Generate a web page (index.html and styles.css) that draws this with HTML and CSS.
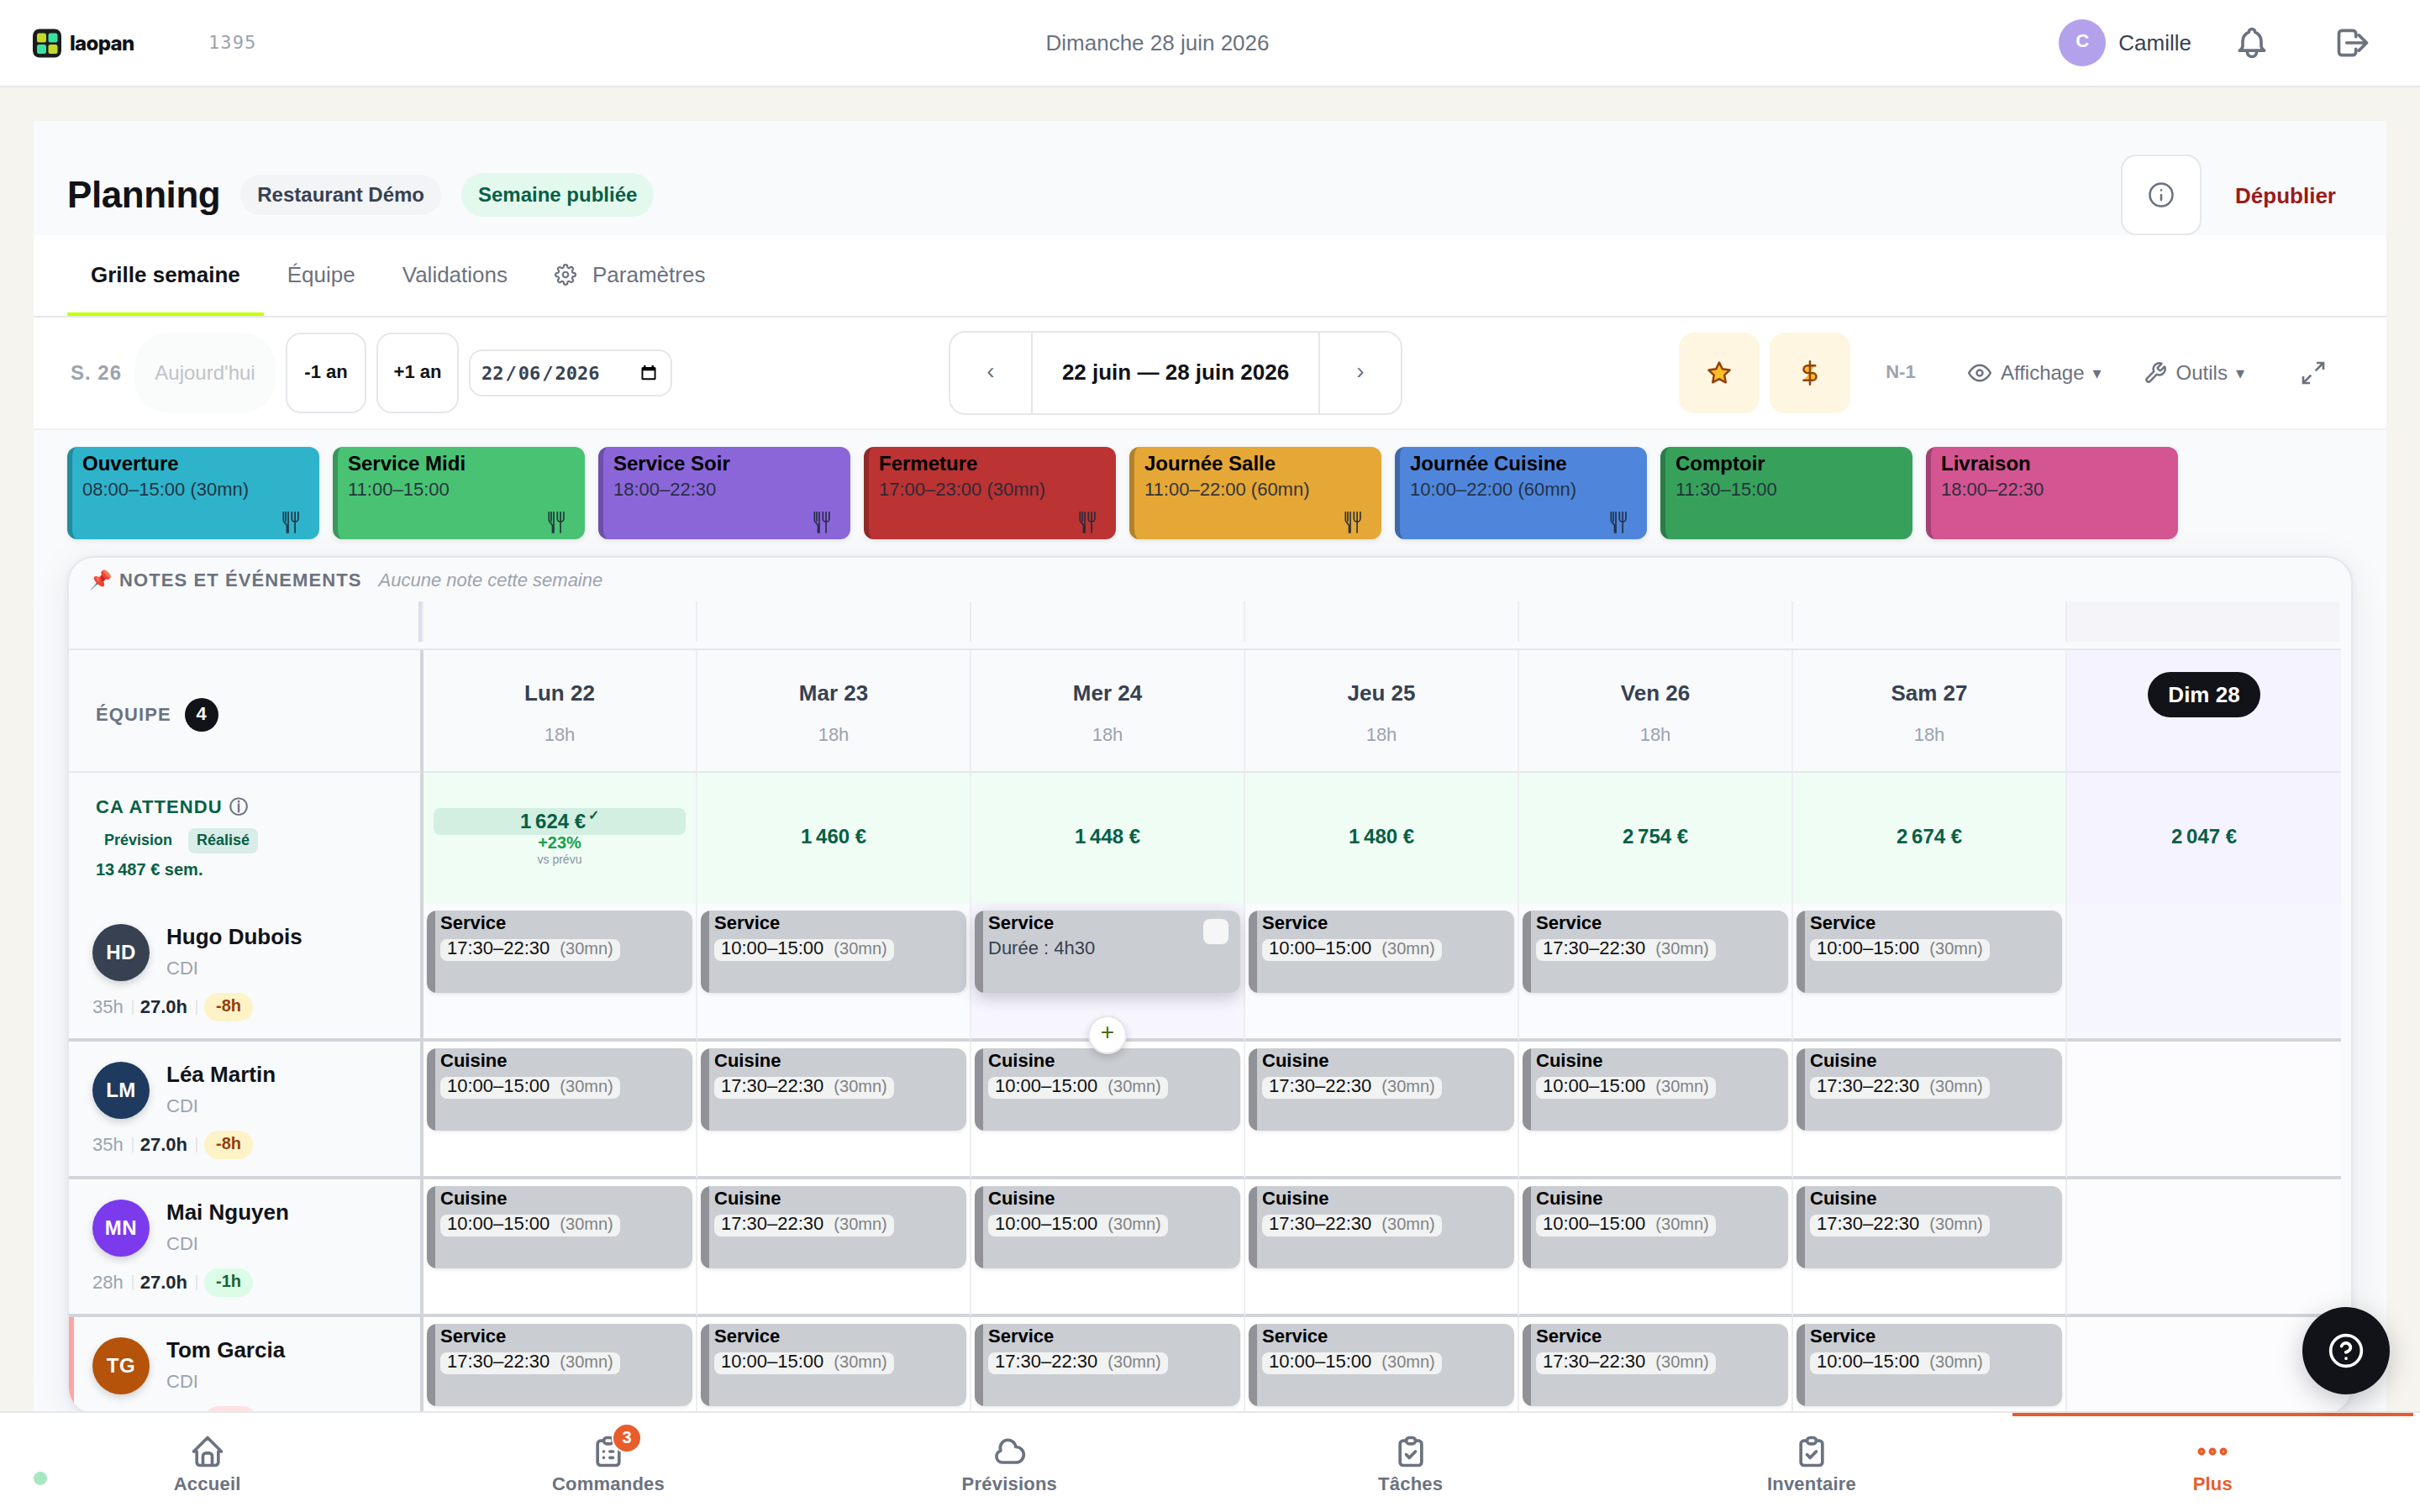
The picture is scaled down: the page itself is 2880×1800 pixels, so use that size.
FILE: index.html
```html
<!DOCTYPE html>
<html lang="fr">
<head>
<meta charset="utf-8">
<title>Planning – laopan</title>
<link rel="stylesheet" href="styles.css">
</head>
<body>
<svg class="sprite" aria-hidden="true">
  <symbol id="cutlery" viewBox="0 0 20 26"><path d="M1.3.8v9.400c0 4 4.200 3 4.200 7.300V25M4 .8v10.500M7 .8V25M11.300.8v7.700a3.800 3.800 0 0 0 7.600 0V.8M15.100.8V25"/></symbol>
  <symbol id="clip-check" viewBox="0 0 24 24"><path d="M9 5H7a2 2 0 0 0-2 2v12a2 2 0 0 0 2 2h10a2 2 0 0 0 2-2V7a2 2 0 0 0-2-2h-2"/><rect x="9" y="3" width="6" height="4" rx="2"/><path d="M9 14l2 2 4-4"/></symbol>
</svg>

<header class="topbar">
  <div class="brand">
    <svg class="brand-mark" viewBox="0 0 34 34"><rect width="34" height="34" rx="8" fill="#1a1d1c"/><rect x="5" y="5" width="11" height="11" rx="2.500" fill="#c5d92b"/><rect x="18.500" y="5" width="11" height="11" rx="2.500" fill="#3ce0a2"/><rect x="5" y="18.500" width="11" height="11" rx="2.500" fill="#3ce0a2"/><rect x="18.500" y="18.500" width="11" height="11" rx="2.500" fill="#c5d92b"/></svg>
    <span class="brand-name">laopan</span>
    <span class="brand-code">1395</span>
  </div>
  <div class="topbar-date">Dimanche 28 juin 2026</div>
  <div class="account">
    <span class="account-avatar">C</span>
    <span class="account-name">Camille</span>
    <svg class="icon icon-44 bell" viewBox="0 0 24 24"><path d="M10 5a2 2 0 1 1 4 0a7 7 0 0 1 4 6v3a4 4 0 0 0 2 3h-16a4 4 0 0 0 2-3v-3a7 7 0 0 1 4-6M9 17v1a3 3 0 0 0 6 0v-1"/></svg>
    <svg class="icon icon-44 logout" viewBox="0 0 24 24"><path d="M14 8V6a2 2 0 0 0-2-2H5a2 2 0 0 0-2 2v12a2 2 0 0 0 2 2h7a2 2 0 0 0 2-2v-2M8 12h13l-5-5M16 17l5-5"/></svg>
  </div>
</header>

<main class="page">
  <section class="sheet">
    <div class="sheet-head">
      <h1 class="title">Planning</h1>
      <span class="pill pill-grey">Restaurant Démo</span>
      <span class="pill pill-green">Semaine publiée</span>
      <button class="info-btn"><svg class="icon icon-36" viewBox="0 0 24 24"><circle cx="12" cy="12" r="9"/><path d="M12 16v-4M12 8.300v-.1"/></svg></button>
      <button class="unpublish">Dépublier</button>
    </div>

    <nav class="tabs">
      <a class="tab tab-active">Grille semaine</a>
      <a class="tab">Équipe</a>
      <a class="tab">Validations</a>
      <a class="tab"><svg class="icon gear" viewBox="0 0 24 24"><circle cx="12" cy="12" r="3"/><path d="M19.400 15a1.650 1.650 0 0 0 .33 1.820l.06.06a2 2 0 0 1 0 2.830 2 2 0 0 1-2.830 0l-.06-.06a1.650 1.650 0 0 0-1.820-.33 1.650 1.650 0 0 0-1 1.510V21a2 2 0 0 1-2 2 2 2 0 0 1-2-2v-.09A1.650 1.650 0 0 0 9 19.400a1.650 1.650 0 0 0-1.820.33l-.06.06a2 2 0 0 1-2.830 0 2 2 0 0 1 0-2.830l.06-.06a1.650 1.650 0 0 0 .33-1.820 1.650 1.650 0 0 0-1.510-1H3a2 2 0 0 1-2-2 2 2 0 0 1 2-2h.09A1.650 1.650 0 0 0 4.600 9a1.650 1.650 0 0 0-.33-1.820l-.06-.06a2 2 0 0 1 0-2.830 2 2 0 0 1 2.830 0l.06.06a1.650 1.650 0 0 0 1.820.33H9a1.650 1.650 0 0 0 1-1.510V3a2 2 0 0 1 2-2 2 2 0 0 1 2 2v.09a1.650 1.650 0 0 0 1 1.510 1.650 1.650 0 0 0 1.820-.33l.06-.06a2 2 0 0 1 2.830 0 2 2 0 0 1 0 2.830l-.06.06a1.650 1.650 0 0 0-.33 1.820V9a1.650 1.650 0 0 0 1.510 1H21a2 2 0 0 1 2 2 2 2 0 0 1-2 2h-.09a1.650 1.650 0 0 0-1.510 1z"/></svg>Paramètres</a>
    </nav>

    <div class="toolbar">
      <div class="tools-left">
        <span class="week-no">S. 26</span>
        <button class="today">Aujourd'hui</button>
        <button class="year-btn">-1 an</button>
        <button class="year-btn year-next">+1 an</button>
        <div class="date-field">
          <span class="date-value"><span>22</span>/<span>06</span>/<span>2026</span></span>
          <svg class="date-icon" viewBox="0 0 18 20"><path fill="#000" fill-rule="evenodd" d="M3 1h2.500v2h7V1H15v2h1.200Q17.500 3 17.500 4.500v12.200q0 1.500-1.500 1.500H2q-1.500 0-1.500-1.500V4.500Q.5 3 2 3h1zM2.400 7.200v9.100h13.200V7.200z"/></svg>
        </div>
      </div>
      <div class="week-nav">
        <button class="week-arrow">‹</button>
        <span class="week-label">22 juin — 28 juin 2026</span>
        <button class="week-arrow">›</button>
      </div>
      <div class="tools-right">
        <button class="amber-btn"><svg class="icon icon-30" viewBox="0 0 24 24"><path d="M12 2l3.090 6.260L22 9.270l-5 4.870 1.180 6.880L12 17.770l-6.180 3.250L7 14.140 2 9.270l6.910-1.010z"/></svg></button>
        <button class="amber-btn"><svg class="icon icon-30" viewBox="0 0 24 24"><path d="M12 1v22M17 5H9.500a3.500 3.500 0 0 0 0 7h5a3.500 3.500 0 0 1 0 7H6"/></svg></button>
        <button class="compare">N-1</button>
        <button class="menu-btn"><svg class="icon icon-28" viewBox="0 0 24 24"><path d="M1 12s4-8 11-8 11 8 11 8-4 8-11 8-11-8-11-8z"/><circle cx="12" cy="12" r="3"/></svg>Affichage<span class="caret">▾</span></button>
        <button class="menu-btn menu-tools"><svg class="icon icon-28" viewBox="0 0 24 24"><path d="M14.700 6.300a1 1 0 0 0 0 1.400l1.600 1.600a1 1 0 0 0 1.400 0l3.770-3.770a6 6 0 0 1-7.940 7.940l-6.910 6.910a2.120 2.120 0 0 1-3-3l6.910-6.910a6 6 0 0 1 7.940-7.940l-3.760 3.760z"/></svg>Outils<span class="caret">▾</span></button>
        <svg class="icon expand" viewBox="0 0 24 24"><path d="M15 3h6v6M9 21H3v-6M21 3l-7 7M3 21l7-7"/></svg>
      </div>
    </div>

    <div class="templates">
      <div class="tpl tpl-cyan"><b>Ouverture</b><span>08:00–15:00 (30mn)</span><svg><use href="#cutlery"/></svg></div>
      <div class="tpl tpl-green"><b>Service Midi</b><span>11:00–15:00</span><svg><use href="#cutlery"/></svg></div>
      <div class="tpl tpl-violet"><b>Service Soir</b><span>18:00–22:30</span><svg><use href="#cutlery"/></svg></div>
      <div class="tpl tpl-red"><b>Fermeture</b><span>17:00–23:00 (30mn)</span><svg><use href="#cutlery"/></svg></div>
      <div class="tpl tpl-orange"><b>Journée Salle</b><span>11:00–22:00 (60mn)</span><svg><use href="#cutlery"/></svg></div>
      <div class="tpl tpl-blue"><b>Journée Cuisine</b><span>10:00–22:00 (60mn)</span><svg><use href="#cutlery"/></svg></div>
      <div class="tpl tpl-forest"><b>Comptoir</b><span>11:30–15:00</span></div>
      <div class="tpl tpl-pink"><b>Livraison</b><span>18:00–22:30</span></div>
    </div>

    <div class="board">
      <div class="notes">
        <div class="notes-head"><span class="pin">📌</span><b>NOTES ET ÉVÉNEMENTS</b><i>Aucune note cette semaine</i></div>
        <div class="notes-row"><div class="notes-first"></div><div></div><div></div><div></div><div></div><div></div><div></div><div class="notes-today"></div></div>
      </div>

      <div class="row row-head">
        <div class="side side-team">ÉQUIPE<span class="count">4</span></div>
        <div class="day"><b>Lun 22</b><span>18h</span></div>
        <div class="day"><b>Mar 23</b><span>18h</span></div>
        <div class="day"><b>Mer 24</b><span>18h</span></div>
        <div class="day"><b>Jeu 25</b><span>18h</span></div>
        <div class="day"><b>Ven 26</b><span>18h</span></div>
        <div class="day"><b>Sam 27</b><span>18h</span></div>
        <div class="day day-today"><b>Dim 28</b></div>
      </div>

      <div class="row row-ca">
        <div class="side side-ca">
          <div class="ca-title">CA ATTENDU <span class="ca-info">ⓘ</span></div>
          <div class="ca-modes"><span class="mode">Prévision</span><span class="mode mode-on">Réalisé</span></div>
          <div class="ca-total">13&#8239;487&nbsp;€ sem.</div>
        </div>
        <div class="ca ca-real"><span class="ca-chip">1&#8239;624&nbsp;€<span class="tick">✓</span></span><span class="ca-delta">+23%</span><span class="ca-vs">vs prévu</span></div>
        <div class="ca">1&#8239;460&nbsp;€</div>
        <div class="ca">1&#8239;448&nbsp;€</div>
        <div class="ca">1&#8239;480&nbsp;€</div>
        <div class="ca">2&#8239;754&nbsp;€</div>
        <div class="ca">2&#8239;674&nbsp;€</div>
        <div class="ca ca-today">2&#8239;047&nbsp;€</div>
      </div>

      <div class="row row-person row-hover">
        <div class="side side-person">
          <div class="who"><span class="avatar av-slate">HD</span><div><div class="name">Hugo Dubois</div><div class="contract">CDI</div></div></div>
          <div class="hours"><span>35h</span><i></i><b>27.0h</b><i></i><em class="gap-amber">-8h</em></div>
        </div>
        <div class="cell"><div class="shift"><b>Service</b><span class="time">17:30–22:30<small>(30mn)</small></span></div></div>
        <div class="cell"><div class="shift"><b>Service</b><span class="time">10:00–15:00<small>(30mn)</small></span></div></div>
        <div class="cell cell-hover"><div class="shift shift-hover"><b>Service</b><span class="duration">Durée : 4h30</span><span class="check"></span></div><span class="add">+</span></div>
        <div class="cell"><div class="shift"><b>Service</b><span class="time">10:00–15:00<small>(30mn)</small></span></div></div>
        <div class="cell"><div class="shift"><b>Service</b><span class="time">17:30–22:30<small>(30mn)</small></span></div></div>
        <div class="cell"><div class="shift"><b>Service</b><span class="time">10:00–15:00<small>(30mn)</small></span></div></div>
        <div class="cell cell-today"></div>
      </div>

      <div class="row row-person">
        <div class="side side-person">
          <div class="who"><span class="avatar av-navy">LM</span><div><div class="name">Léa Martin</div><div class="contract">CDI</div></div></div>
          <div class="hours"><span>35h</span><i></i><b>27.0h</b><i></i><em class="gap-amber">-8h</em></div>
        </div>
        <div class="cell"><div class="shift"><b>Cuisine</b><span class="time">10:00–15:00<small>(30mn)</small></span></div></div>
        <div class="cell"><div class="shift"><b>Cuisine</b><span class="time">17:30–22:30<small>(30mn)</small></span></div></div>
        <div class="cell"><div class="shift"><b>Cuisine</b><span class="time">10:00–15:00<small>(30mn)</small></span></div></div>
        <div class="cell"><div class="shift"><b>Cuisine</b><span class="time">17:30–22:30<small>(30mn)</small></span></div></div>
        <div class="cell"><div class="shift"><b>Cuisine</b><span class="time">10:00–15:00<small>(30mn)</small></span></div></div>
        <div class="cell"><div class="shift"><b>Cuisine</b><span class="time">17:30–22:30<small>(30mn)</small></span></div></div>
        <div class="cell cell-today"></div>
      </div>

      <div class="row row-person">
        <div class="side side-person">
          <div class="who"><span class="avatar av-purple">MN</span><div><div class="name">Mai Nguyen</div><div class="contract">CDI</div></div></div>
          <div class="hours"><span>28h</span><i></i><b>27.0h</b><i></i><em class="gap-green">-1h</em></div>
        </div>
        <div class="cell"><div class="shift"><b>Cuisine</b><span class="time">10:00–15:00<small>(30mn)</small></span></div></div>
        <div class="cell"><div class="shift"><b>Cuisine</b><span class="time">17:30–22:30<small>(30mn)</small></span></div></div>
        <div class="cell"><div class="shift"><b>Cuisine</b><span class="time">10:00–15:00<small>(30mn)</small></span></div></div>
        <div class="cell"><div class="shift"><b>Cuisine</b><span class="time">17:30–22:30<small>(30mn)</small></span></div></div>
        <div class="cell"><div class="shift"><b>Cuisine</b><span class="time">10:00–15:00<small>(30mn)</small></span></div></div>
        <div class="cell"><div class="shift"><b>Cuisine</b><span class="time">17:30–22:30<small>(30mn)</small></span></div></div>
        <div class="cell cell-today"></div>
      </div>

      <div class="row row-person">
        <div class="side side-person side-alert">
          <div class="who"><span class="avatar av-rust">TG</span><div><div class="name">Tom Garcia</div><div class="contract">CDI</div></div></div>
          <div class="hours"><span>20h</span><i></i><b>27.0h</b><i></i><em class="gap-red">+7h</em></div>
        </div>
        <div class="cell"><div class="shift"><b>Service</b><span class="time">17:30–22:30<small>(30mn)</small></span></div></div>
        <div class="cell"><div class="shift"><b>Service</b><span class="time">10:00–15:00<small>(30mn)</small></span></div></div>
        <div class="cell"><div class="shift"><b>Service</b><span class="time">17:30–22:30<small>(30mn)</small></span></div></div>
        <div class="cell"><div class="shift"><b>Service</b><span class="time">10:00–15:00<small>(30mn)</small></span></div></div>
        <div class="cell"><div class="shift"><b>Service</b><span class="time">17:30–22:30<small>(30mn)</small></span></div></div>
        <div class="cell"><div class="shift"><b>Service</b><span class="time">10:00–15:00<small>(30mn)</small></span></div></div>
        <div class="cell cell-today"></div>
      </div>
    </div>
  </section>
</main>

<nav class="bottom-nav">
  <a class="nav-item"><svg class="icon icon-44" viewBox="0 0 24 24"><path d="M5 12H3l9-9 9 9h-2M5 12v7a2 2 0 0 0 2 2h10a2 2 0 0 0 2-2v-7M9 21v-6a2 2 0 0 1 2-2h2a2 2 0 0 1 2 2v6"/></svg>Accueil</a>
  <a class="nav-item"><span class="nav-badged"><svg class="icon icon-44" viewBox="0 0 24 24"><path d="M9 5H7a2 2 0 0 0-2 2v12a2 2 0 0 0 2 2h10a2 2 0 0 0 2-2V7a2 2 0 0 0-2-2h-2"/><rect x="9" y="3" width="6" height="4" rx="2"/><path d="M9 12h.01M13 12h2M9 16h.01M13 16h2"/></svg><span class="badge">3</span></span>Commandes</a>
  <a class="nav-item"><svg class="icon icon-44" viewBox="0 0 24 24"><path d="M16.300 9a5.050 5.050 0 0 1 .2 10.100H7.500a3.950 3.950 0 0 1-1-7.700A5.080 5.080 0 1 1 16.300 9z"/></svg>Prévisions</a>
  <a class="nav-item"><svg class="icon icon-44"><use href="#clip-check"/></svg>Tâches</a>
  <a class="nav-item"><svg class="icon icon-44"><use href="#clip-check"/></svg>Inventaire</a>
  <a class="nav-item nav-active"><svg class="icon icon-44" viewBox="0 0 24 24"><circle cx="4.900" cy="12" r="1.450"/><circle cx="12" cy="12" r="1.450"/><circle cx="19.100" cy="12" r="1.450"/></svg>Plus</a>
</nav>
<span class="online-dot"></span>
<button class="help"><svg class="icon help-icon" viewBox="0 0 24 24"><circle cx="12" cy="12" r="10"/><path d="M9.090 9a3 3 0 0 1 5.830 1c0 2-3 3-3 3M12 17h.01"/></svg></button>
</body>
</html>
```
FILE: styles.css
```css
* { box-sizing: border-box; }
html, body { margin: 0; }
body {
  width: 2880px; height: 1800px; overflow: hidden; position: relative;
  display: flex; flex-direction: column;
  background: #f5f4ef; color: #111318;
  font-family: "Liberation Sans", Arial, sans-serif; font-size: 26px;
}
button { font: inherit; color: inherit; background: none; border: 0; padding: 0; margin: 0; }
.sprite { position: absolute; width: 0; height: 0; }
.icon { fill: none; stroke: currentColor; stroke-width: 2; stroke-linecap: round; stroke-linejoin: round; flex: none; display: block; }
.icon-44 { width: 44px; height: 44px; }
.icon-36 { width: 36px; height: 36px; stroke-width: 1.7; }
.icon-30 { width: 30px; height: 30px; }
.icon-28 { width: 28px; height: 28px; stroke-width: 2.1; }

/* Top bar */
.topbar {
  flex: none; height: 104px; background: #fff; border-bottom: 2px solid #e5e7eb;
  display: flex; justify-content: space-between; align-items: center; padding: 0 58px 0 39px;
}
.brand { display: flex; align-items: center; width: 266px; }
.brand-mark { width: 34px; height: 35px; flex: none; }
.brand-name { font-family: Inter, sans-serif; font-weight: 800; font-size: 24px; letter-spacing: -.7px; margin-left: 10px; width: 165px; flex: none; }
.brand-code { font-family: "DejaVu Sans Mono", monospace; font-size: 22px; letter-spacing: 1.1px; color: #9ca3af; padding-bottom: 1px; }
.topbar-date { color: #6b7280; }
.account { display: flex; align-items: center; justify-content: flex-end; width: 372px; }
.account-avatar {
  width: 56px; height: 56px; border-radius: 50%; background: #b4a1ec; color: #fff;
  font-size: 22px; font-weight: 700; display: flex; align-items: center; justify-content: center; padding-bottom: 5px;
}
.account-name { color: #374151; margin-left: 15px; }
.account .icon { color: #6b7280; }
.bell { margin-left: 50px; }
.logout { margin-left: 76px; }

/* Page sheet */
.page { flex: 1; min-height: 0; overflow: hidden; padding: 40px 40px 0; }
.sheet { background: #f8fafc; height: 1600px; }
.sheet-head { height: 136px; padding: 40px 40px 0; display: flex; align-items: center; }
.title { margin: 0 24px 0 0; font-size: 44px; letter-spacing: -.44px; line-height: 56px; }
.pill { font-size: 24px; font-weight: 700; padding: 0 20px; border-radius: 26px; }
.pill-grey { background: #f3f4f6; color: #374151; line-height: 48px; margin-right: 24px; }
.pill-green { background: #e4f9ed; color: #065f46; line-height: 52px; }
.info-btn {
  width: 96px; height: 96px; margin-left: auto; background: #fff; border: 2px solid #e5e7eb; border-radius: 18px;
  display: flex; align-items: center; justify-content: center; color: #6b7280;
}
.unpublish { color: #991b1b; font-weight: 700; margin-left: 20px; padding: 2px 20px 0; }

.tabs { height: 98px; background: #fff; border-bottom: 2px solid #e5e7eb; padding: 0 40px; display: flex; }
.tab { height: 96px; padding: 2px 28px 0; border-bottom: 4px solid transparent; display: flex; align-items: center; color: #6b7280; }
.tab-active { color: #111318; font-weight: 700; border-color: #c8ff00; }
.gear { width: 26px; height: 26px; margin: 0 19px 1px 0; }

.toolbar {
  height: 134px; background: #fff; border-bottom: 2px solid #f0f1f4; padding: 0 40px;
  display: flex; justify-content: space-between; align-items: center;
}
.tools-left, .tools-right { display: flex; align-items: center; }
.week-no { width: 76px; margin-left: 4px; font-size: 24px; font-weight: 700; letter-spacing: 1px; color: #9ca3af; }
.today { width: 168px; height: 96px; border-radius: 40px; background: #fafcfb; color: #c0c3c8; font-size: 24px; }
.year-btn {
  width: 96px; height: 96px; margin-left: 12px; border: 2px solid #e5e7eb; border-radius: 18px; background: #fff;
  font-size: 22px; font-weight: 700; padding-bottom: 3px;
}
.year-next { width: 98px; }
.date-field {
  width: 242px; height: 56px; margin-left: 12px; border: 2px solid #e5e7eb; border-radius: 16px; background: #fff;
  display: flex; align-items: center; justify-content: space-between; padding: 0 17px 0 11px;
  font: 700 22px "DejaVu Sans Mono", monospace; color: #374151;
}
.date-value span { padding: 0 2px; }
.date-icon { width: 18px; height: 20px; }
.week-nav { height: 100px; width: 540px; border: 2px solid #e5e7eb; border-radius: 20px; display: flex; align-items: stretch; }
.week-arrow { width: 96px; font-size: 28px; color: #6b7280; padding-bottom: 4px; }
.week-label {
  flex: 1; border: solid #e5e7eb; border-width: 0 2px; font-weight: 700; padding-bottom: 2px;
  display: flex; align-items: center; justify-content: center; white-space: nowrap;
}
.tools-right { justify-content: flex-end; width: 802px; color: #6b7280; font-size: 24px; padding-right: 31px; }
.amber-btn {
  width: 96px; height: 96px; margin-right: 12px; border-radius: 18px; background: #fef6e0; color: #92400e;
  display: flex; align-items: center; justify-content: center;
}
.amber-btn .icon { fill: #fbbf24; }
.compare { width: 96px; margin-right: 32px; font-size: 22px; font-weight: 700; color: #9ca3af; padding-bottom: 3px; }
.menu-btn { display: flex; align-items: center; gap: 11px; }
.menu-tools { margin-left: 50px; }
.caret { font-family: "DejaVu Sans", sans-serif; font-size: 20px; line-height: 24px; margin-left: -1px; }
.expand { width: 32px; height: 32px; stroke-width: 2; stroke-linejoin: miter; stroke-linecap: butt; margin-left: 66px; }

/* Shift templates */
.templates { display: flex; gap: 16px; padding: 20px 40px; }
.tpl {
  position: relative; width: 300px; height: 110px; border-radius: 12px; border-left: 6px solid rgba(0,0,0,.22);
  padding: 7px 12px; display: flex; flex-direction: column; box-shadow: 0 2px 6px rgba(0,0,0,.08);
}
.tpl b { font-size: 24px; line-height: 26px; color: #000; }
.tpl span { font-size: 22px; line-height: 26px; margin-top: 5px; color: #1f2937; opacity: .9; }
.tpl svg { position: absolute; right: 24px; bottom: 7px; width: 20px; height: 26px; fill: none; stroke: #1f2937; stroke-width: 1.700; stroke-linecap: round; opacity: .9; }
.tpl-cyan { background-color: #2eb3ca; }
.tpl-green { background-color: #4ac274; }
.tpl-violet { background-color: #8b66d9; }
.tpl-red { background-color: #bb3333; }
.tpl-orange { background-color: #e5a736; }
.tpl-blue { background-color: #4f86db; }
.tpl-forest { background-color: #37a15c; }
.tpl-pink { background-color: #d35591; }

/* Board */
.board {
  margin: 0 40px; height: 1022px; border: 2px solid #e5e7eb; border-radius: 32px; overflow: hidden;
  padding-right: 12px; background: #f8fafc; box-shadow: 0 2px 8px rgba(15,23,42,.06), 0 8px 48px rgba(15,23,42,.07);
}
.notes { height: 110px; border-bottom: 2px solid #e5e7eb; background: #f9fafb; }
.notes-head { height: 52px; padding: 2px 0 0 24px; display: flex; align-items: center; font-size: 22px; }
.notes-head b { margin-left: 9px; color: #6b7280; letter-spacing: 1.1px; }
.notes-head i { margin-left: 20px; color: #9ca3af; }
.pin { font-size: 22px; width: 27px; }
.notes-row { height: 48px; display: grid; grid-template-columns: 420px repeat(7, 326px); }
.notes-row div { border-left: 2px solid #ebedf2; }
.notes-row .notes-first { border-left: 0; border-right: 4px solid #dcdfea; }
.notes-row .notes-today { background: #f4f4f9; }

.row { display: grid; grid-template-columns: 422px repeat(7, 326px); }
.side { background: #f8fafc; border-right: 4px solid #d1d5db; }
.row > div:not(.side):not(:last-child) { border-right: 2px solid #eceef1; }

.row-head { height: 146px; }
.row-head > div { border-bottom: 2px solid #e5e7eb; }
.side-team { display: flex; align-items: center; padding: 9px 0 0 32px; font-size: 22px; letter-spacing: 1.1px; color: #6b7280; font-weight: 700; }
.count {
  width: 40px; height: 40px; border-radius: 50%; margin-left: 16px; background: #111318; color: #fff;
  font-weight: 700; letter-spacing: 0; display: flex; align-items: center; justify-content: center; padding-bottom: 2px;
}
.day { display: flex; flex-direction: column; align-items: center; gap: 16px; padding-top: 34px; background: #f9fafc; }
.day b { line-height: 34px; color: #374151; }
.day span { font-size: 22px; line-height: 34px; color: #9ca3af; }
.day-today { background: #f5f3ff; padding-top: 26px; }
.day-today b { background: #111318; color: #fff; border-radius: 27px; padding: 0 24px; line-height: 54px; }

.row-ca { height: 156px; }
.side-ca { padding: 26px 0 0 32px; color: #065f46; font-weight: 700; }
.ca-title { font-size: 22px; line-height: 30px; height: 30px; letter-spacing: 1.1px; }
.ca-info { color: #6b7280; margin-left: 1px; }
.ca-modes { margin-top: 10px; display: flex; gap: 9px; font-size: 18px; line-height: 29px; }
.mode { padding: 0 10px 1px; border-radius: 8px; }
.mode-on { background: #d9ece7; }
.ca-total { font-size: 20px; line-height: 30px; margin-top: 4px; }
.ca { background: #f0fdf4; display: flex; flex-direction: column; align-items: center; justify-content: center; font-size: 24px; font-weight: 700; color: #065f46; padding-bottom: 5px; }
.ca-real { padding: 0 12px; }
.ca-chip { align-self: stretch; height: 32px; line-height: 31px; border-radius: 8px; background: #d2efe1; text-align: center; }
.tick { font-size: 16px; vertical-align: 10px; margin-left: 3px; line-height: 1; }
.ca-delta { font-size: 20px; line-height: 18px; color: #16a34a; }
.ca-vs { font-size: 14px; line-height: 22px; font-weight: 400; color: #8b929c; }
.ca-today { background: #f5f3ff; }

.row-person { height: 164px; }
.row-person > div { border-bottom: 4px solid #d1d5db; }
.side-person { padding: 24px 0 0 28px; }
.side-alert { border-left: 6px solid #fca5a5; padding-left: 22px; }
.who { display: flex; gap: 20px; height: 82px; }
.avatar {
  width: 68px; height: 68px; border-radius: 50%; color: #fff; font-size: 24px; font-weight: 700; letter-spacing: .5px;
  display: flex; align-items: center; justify-content: center; box-shadow: 0 4px 10px rgba(0,0,0,.16);
}
.av-slate { background: #374151; }
.av-navy { background: #1e3a5f; }
.av-purple { background: #7c3aed; }
.av-rust { background: #b45309; }
.name { font-weight: 700; line-height: 34px; margin-top: -2px; }
.contract { font-size: 22px; line-height: 42px; color: #9ca3af; }
.hours { display: flex; align-items: center; height: 34px; font-size: 22px; color: #9ca3af; }
.hours b { color: #1f2937; }
.hours i { width: 2px; height: 18px; background: #e5e7eb; margin: 0 8px 0 10px; }
.hours em { font-style: normal; font-weight: 700; font-size: 20px; line-height: 30px; padding: 0 14px 4px; border-radius: 17px; }
.gap-amber { background: #fef3c7; color: #92400e; }
.gap-green { background: #dcfce7; color: #166534; }
.gap-red { background: #fee2e2; color: #991b1b; }

.cell { background: #fff; padding: 8px 4px; position: relative; }
.row-hover .cell { background: #fafbff; }
.cell-today { background: #fcfcfe; }
.row-hover .cell-today { background: #f6f6fe; }
.row-hover .cell-hover { background: #f7f5fe; }
.shift {
  position: relative; height: 98px; border-radius: 12px; padding: 1px 0 0 16px; background: linear-gradient(90deg, #909297 10px, #cacdd2 10px);
  display: flex; flex-direction: column; align-items: flex-start; font-size: 22px; box-shadow: 0 2px 4px rgba(0,0,0,.08);
}
.shift b { line-height: 28px; color: #000; }
.time { height: 26px; line-height: 22px; margin-top: 5px; padding: 0 8px; border-radius: 8px; background: #f1f2f2; color: #111; white-space: nowrap; }
.time small { font-size: 20px; color: #808386; margin-left: 12px; }
.duration { line-height: 22px; margin-top: 5px; color: #374151; }
.shift-hover { box-shadow: 0 6px 20px rgba(0,0,0,.2); }
.check { position: absolute; right: 14px; top: 10px; width: 30px; height: 30px; border-radius: 8px; background: #f6f6f7; }
.add {
  position: absolute; z-index: 2; left: 139px; bottom: -19px; width: 46px; height: 46px; border-radius: 50%;
  background: #fff; border: 2px solid #e5e7eb; color: #4d6b0f; font-size: 28px; line-height: 36px; text-align: center;
  box-shadow: 0 4px 10px rgba(0,0,0,.16);
}

/* Bottom navigation */
.bottom-nav { flex: none; height: 120px; background: #fff; border-top: 2px solid #e5e7eb; padding: 0 8px; display: flex; position: relative; z-index: 3; }
.nav-item {
  flex: 1; border-top: 4px solid transparent; padding-top: 20px; display: flex; flex-direction: column; align-items: center;
  font-size: 22px; font-weight: 700; letter-spacing: .22px; line-height: 33px; color: #6b7280;
}
.nav-active { color: #e85d2c; border-color: #e85d2c; }
.nav-badged { position: relative; }
.badge {
  position: absolute; left: 26px; top: -12px; width: 36px; height: 36px; border-radius: 50%; border: 2px solid #fff;
  background: #e85d2c; color: #fff; font-size: 20px; line-height: 30px; letter-spacing: 0; text-align: center;
}
.online-dot { position: absolute; z-index: 4; left: 40px; top: 1752px; width: 16px; height: 16px; border-radius: 50%; background: #a7e8c3; }
.help {
  position: absolute; z-index: 4; left: 2740px; top: 1556px; width: 104px; height: 104px; border-radius: 50%; background: #111318; color: #fff;
  display: flex; align-items: center; justify-content: center; box-shadow: 0 8px 32px rgba(0,0,0,.22);
}
.help-icon { width: 44px; height: 44px; }
```
